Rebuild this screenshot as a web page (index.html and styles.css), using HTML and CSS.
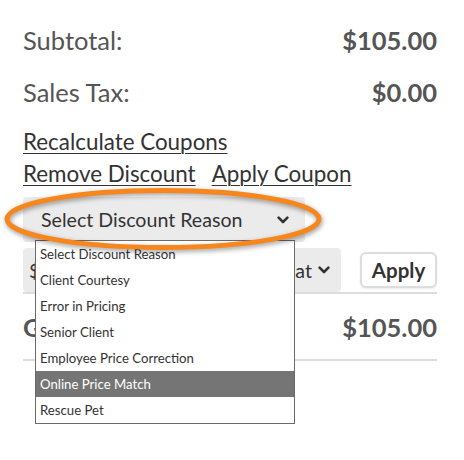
FILE: index.html
```html
<!DOCTYPE html>
<html>
<head>
<meta charset="utf-8">
<link rel="stylesheet" href="styles.css">
</head>
<body>
<div class="panel">
  <div class="total-row"><span class="label">Subtotal:</span><span class="value">$105.00</span></div>
  <div class="total-row"><span class="label">Sales Tax:</span><span class="value">$0.00</span></div>
  <div class="links">
    <div><a href="#">Recalculate Coupons</a></div>
    <div class="link-line"><a href="#">Remove Discount</a><a href="#">Apply Coupon</a></div>
  </div>
  <div class="reason-wrap">
    <div class="select select-reason">
      <span class="sel-text">Select Discount Reason</span>
      <svg class="chev" viewBox="0 0 12 8" width="12" height="8"><path d="M1.6 1.6 L6 6 L10.4 1.6" /></svg>
    </div>
    <ul class="dropdown">
      <li>Select Discount Reason</li>
      <li>Client Courtesy</li>
      <li>Error in Pricing</li>
      <li>Senior Client</li>
      <li>Employee Price Correction</li>
      <li class="active">Online Price Match</li>
      <li>Rescue Pet</li>
    </ul>
    <svg class="ring" viewBox="0 0 330 70" width="330" height="70">
      <ellipse cx="163" cy="34" rx="156" ry="28.5" />
    </svg>
  </div>
  <div class="discount-row">
    <div class="select select-type">
      <span class="sel-text">$ Amount Off</span>
      <span class="sel-text type-end">Flat</span>
      <svg class="chev" viewBox="0 0 12 8" width="12" height="8"><path d="M1.6 1.6 L6 6 L10.4 1.6" /></svg>
    </div>
    <button class="apply">Apply</button>
  </div>
  <div class="total-row grand"><span class="value">Grand Total:</span><span class="value">$105.00</span></div>
</div>
</body>
</html>
```

FILE: styles.css
```css
* { box-sizing: border-box; }
html, body { margin: 0; padding: 0; background: #fff; }
body {
  font-family: Lato, "Liberation Sans", sans-serif;
  color: #555;
  min-height: 460px;
}
.panel {
  width: 464px;
  min-height: 460px;
  padding: 14px 27px 0 23px;
}
.total-row {
  display: flex;
  justify-content: space-between;
  font-size: 25.5px;
  line-height: 52px;
}
.value { font-weight: 700; }
.links {
  margin-top: 8px;
  font-size: 22.4px;
  line-height: 32px;
}
.links a {
  color: #333;
  text-decoration: underline;
  text-underline-offset: 3px;
  text-decoration-thickness: 1px;
}
.link-line { display: flex; gap: 16px; }
.reason-wrap {
  position: relative;
  margin-top: 7px;
}
.select {
  display: flex;
  align-items: center;
  background: #ebebeb;
  border-radius: 4px;
  height: 45px;
  font-size: 19.6px;
  color: #333;
}
.select-reason {
  width: 282px;
  padding: 0 16px 0 18px;
  justify-content: space-between;
}
.chev { flex: none; }
.chev path {
  fill: none;
  stroke: #333;
  stroke-width: 2.6;
  stroke-linecap: round;
  stroke-linejoin: round;
}
.dropdown {
  position: absolute;
  top: 43px;
  left: 12px;
  width: 260px;
  margin: 0;
  padding: 0;
  list-style: none;
  background: #fff;
  border: 1px solid #6b6b6b;
  font-size: 13.2px;
  color: #333;
  z-index: 2;
}
.dropdown li {
  height: 26px;
  line-height: 26px;
  padding-left: 4px;
}
.dropdown li.active {
  background: #757575;
  color: #fff;
}
.ring {
  position: absolute;
  left: -23px;
  top: -12px;
  z-index: 3;
  overflow: visible;
  filter: drop-shadow(1px 2px 2.5px rgba(0,0,0,0.4));
}
.ring ellipse {
  fill: none;
  stroke: #f7861c;
  stroke-width: 5;
}
.discount-row {
  display: flex;
  align-items: center;
  gap: 19px;
  margin-top: 6px;
  border-bottom: 2px solid #ddd;
}
.select-type {
  width: 318px;
  height: 44px;
  padding: 0 11px 0 6px;
  white-space: nowrap;
}
.type-end {
  margin-left: auto;
  margin-right: 6px;
}
.apply {
  width: 77px;
  height: 36px;
  background: #fff;
  border: 2px solid #ddd;
  border-radius: 6px;
  font-family: Lato, "Liberation Sans", sans-serif;
  font-weight: 700;
  font-size: 20.5px;
  color: #333;
  padding: 0;
  box-shadow: 0 1px 2px rgba(0,0,0,0.08);
}
.grand {
  padding: 7px 0 6px;
  border-bottom: 2px solid #ddd;
}
```
